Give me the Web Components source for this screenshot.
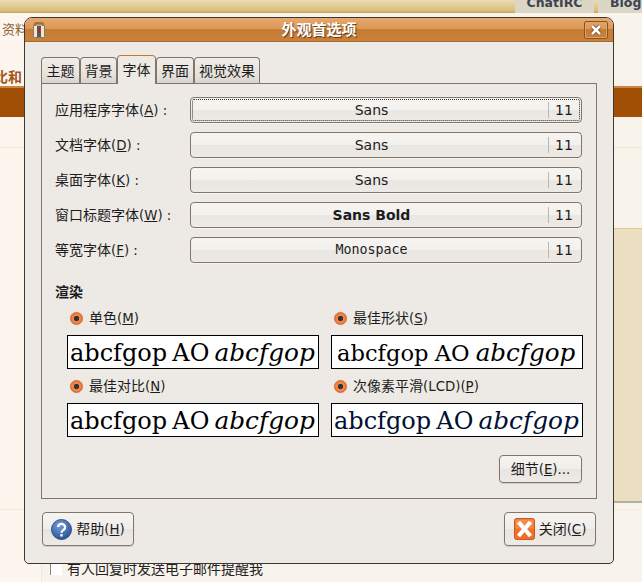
<!DOCTYPE html>
<html lang="zh">
<head>
<meta charset="utf-8">
<title>外观首选项</title>
<style>
html, body { margin: 0; height: 100%; overflow: hidden; }
body { font: 14px "DejaVu Sans", "Noto Sans CJK SC", sans-serif; color: #1c1c1c; }
</style>
</head>
<body>
<page-backdrop></page-backdrop>
<prefs-dialog>
  <tab-item slot="tabs" class="first">主题</tab-item>
  <tab-item slot="tabs" class="second">背景</tab-item>
  <tab-item slot="tabs" active>字体</tab-item>
  <tab-item slot="tabs">界面</tab-item>
  <tab-item slot="tabs">视觉效果</tab-item>

  <font-row focused key="A" label="应用程序字体" font="Sans"></font-row>
  <font-row key="D" label="文档字体" font="Sans"></font-row>
  <font-row key="K" label="桌面字体" font="Sans"></font-row>
  <font-row key="W" label="窗口标题字体" font="Sans Bold" bold></font-row>
  <font-row key="F" label="等宽字体" font="Monospace" mono></font-row>

  <render-option slot="render" key="M" label="单色" mode="mono"></render-option>
  <render-option slot="render" key="S" label="最佳形状" mode="shape"></render-option>
  <render-option slot="render" key="N" label="最佳对比" mode="contrast"></render-option>
  <render-option slot="render" key="P" label="次像素平滑(LCD)" mode="lcd"></render-option>

  <gtk-button slot="details" label="细节" key="E" tail="..."></gtk-button>
  <gtk-button slot="help" wide label="帮助" key="H">
    <svg slot="icon" width="21" height="21" viewBox="1.5 1.5 21 21">
      <defs><radialGradient id="h" cx=".4" cy=".3" r=".8"><stop offset="0" stop-color="#7a9fd8"/><stop offset="1" stop-color="#1d4a90"/></radialGradient></defs>
      <circle cx="12" cy="12" r="10" fill="url(#h)" stroke="#2d4f86"/>
      <path d="M8.6 9.6a3.5 3.3 0 1 1 5.6 2.7c-1.3 1-2.2 1.4-2.2 3" fill="none" stroke="#fff" stroke-width="2.3"/>
      <rect x="10.8" y="16.6" width="2.4" height="2.4" fill="#fff"/>
    </svg>
  </gtk-button>
  <gtk-button slot="close" wide label="关闭" key="C">
    <svg slot="icon" width="21" height="22" viewBox="0 0 21 22">
      <rect x=".5" y=".5" width="20" height="21" rx="2" fill="#f0702a" stroke="#c9591c"/>
      <rect x="1.5" y="1.5" width="18" height="9" fill="#f68b4e"/>
      <path d="M4.5 4l12 14M16.5 4l-12 14" stroke="#fff" stroke-width="4.2"/>
    </svg>
  </gtk-button>
</prefs-dialog>

<script>
// latin runs of the labels are set a bit smaller than the CJK ones
function latinSmall(text) {
  return text.replace(/[\x20-\x7e]+/g, (m) => `<span style="font-size:13.33px">${m}</span>`);
}

class PageBackdrop extends HTMLElement {
  connectedCallback() {
    this.attachShadow({ mode: 'open' });
    this.shadowRoot.innerHTML = `<style>
      :host { display: block; height: 582px; background: #f8f4ec; position: relative; overflow: hidden; font-family: "DejaVu Sans", "Noto Sans CJK SC", sans-serif; }
      .top { height: 13px; background: linear-gradient(#eadcb6, #dcbb76 85%, #b9a068); display: flex; justify-content: flex-end; gap: 4px; }
      .tab { height: 13px; background: #dcd6c4; color: #3c4456; font: bold 12.5px "DejaVu Sans", sans-serif; line-height: 6px; overflow: hidden; box-sizing: border-box; }
      .tab.a { width: 79px; text-align: center; }
      .tab.b { width: 44px; padding-left: 12px; }
      .left { position: absolute; left: 0; top: 13px; width: 41px; height: 569px; background: #fdf6ef; }
      .ziliao { position: absolute; left: 2px; top: 19px; font-size: 13px; color: #8a6238; white-space: nowrap; }
      .bihe { position: absolute; left: -6px; top: 66px; font: bold 14px "Noto Sans CJK SC", sans-serif; color: #a4561a; white-space: nowrap; }
      .band { position: absolute; left: 0; right: 0; top: 86px; height: 31px; background: #a04f04; border-top: 2px solid #cc843f; box-sizing: border-box; }
      .rule { position: absolute; left: 0; right: 0; top: 147px; height: 1px; background: #f2e6d6; }
      .rule2 { position: absolute; left: 0; right: 0; top: 509px; height: 1px; background: #f6ead8; }
      .tan { position: absolute; left: 613px; right: 0; top: 228px; height: 273px; background: #ecdfc1; border-top: 1px solid #d8c89c; box-sizing: border-box; }
      .grey { position: absolute; left: 613px; right: 0; top: 501px; height: 2px; background: #b4b0a6; }
      .notify { position: absolute; left: 50px; top: 558px; display: flex; align-items: center; gap: 5px; font-size: 14px; color: #222; white-space: nowrap; }
      .notify i { width: 12px; height: 13px; background: #fff; border-left: 1px solid #888; box-sizing: border-box; }
      .gutter { position: absolute; left: 41px; top: 560px; bottom: 0; width: 1px; background: #f2e6d6; }
    </style>
    <div class="top"><div class="tab a">ChatIRC</div><div class="tab b">Blog</div></div>
    <div class="left"></div>
    <div class="ziliao">资料</div>
    <div class="bihe">比和</div>
    <div class="band"></div>
    <div class="rule"></div><div class="rule2"></div>
    <div class="tan"></div><div class="grey"></div>
    <div class="gutter"></div>
    <div class="notify"><i></i>有人回复时发送电子邮件提醒我</div>`;
  }
}

class PrefsDialog extends HTMLElement {
  connectedCallback() {
    this.attachShadow({ mode: 'open' });
    this.shadowRoot.innerHTML = `<style>
      :host { display: flex; flex-direction: column; position: absolute; left: 24px; top: 17px; width: 590px; height: 547px; box-sizing: border-box;
        background: #edeae5; border: 1px solid #3e372e; border-radius: 8px 8px 5px 5px; overflow: hidden; }
      .title { height: 24px; flex: none; display: grid; grid-template-columns: 1fr auto 1fr; align-items: center; box-sizing: border-box; border-bottom: 1px solid #a8672c;
        background: linear-gradient(#e6a86e, #da9856 50%, #c67c34 50%, #c9813b); }
      .title b { color: #fff; font: bold 15px/20px "Noto Sans CJK SC", sans-serif; text-shadow: 1px 1px 1px #5a3a18; padding-bottom: 2px; }
      .app { margin-left: 8px; display: block; }
      .x { width: 24px; height: 18px; margin-right: 5px; justify-self: end; border: 1px solid #8a5421; border-radius: 2px; box-shadow: inset 0 0 0 1px #dba26b; display: flex; align-items: center; justify-content: center; box-sizing: border-box; }
      .body { flex: 1; display: flex; flex-direction: column; padding: 13px 16px 0; }
      .tabs { display: flex; align-items: flex-end; height: 28px; flex: none; }
      .book { height: 416px; width: 556px; box-sizing: border-box; flex: none; border: 1px solid #82766a; padding: 13px 14px 0 13px; }
      .rows { display: flex; flex-direction: column; gap: 9px; }
      h4 { margin: 18px 0 0; font: bold 14px/20px "Noto Sans CJK SC", sans-serif; }
      .grid { display: grid; grid-template-columns: 252px 252px; column-gap: 12px; padding: 6px 0 0 12px; }
      .det { display: flex; justify-content: flex-end; margin-top: 12px; }
      .det ::slotted(*) { width: 83px; height: 28px; }
      .foot { flex: 1; display: flex; justify-content: space-between; align-items: flex-start; padding: 13px 1px 0 1px; }
    </style>
    <div class="title">
      <svg class="app" width="12" height="16" viewBox="0 0 12 16">
        <rect x=".5" y="3" width="11" height="12.5" rx="1" fill="#ece6d8" stroke="#8a7a5c"/>
        <path d="M2 4V2a1 1 0 0 1 1-1h6a1 1 0 0 1 1 1v2" fill="none" stroke="#8f6a2e" stroke-width="1.5"/>
        <rect x="4" y="4" width="4" height="11" fill="#5a5a5a"/><rect x="5" y="6" width="2" height="5" fill="#b3261e"/>
      </svg>
      <b>外观首选项</b>
      <div class="x"><svg width="12" height="12" viewBox="0 0 12 12"><path d="M2 2l8 8M10 2l-8 8" stroke="#6b4318" stroke-width="4"/><path d="M2 2l8 8M10 2l-8 8" stroke="#fff" stroke-width="2.6"/></svg></div>
    </div>
    <div class="body">
      <div class="tabs"><slot name="tabs"></slot></div>
      <div class="book">
        <div class="rows"><slot></slot></div>
        <h4>渲染</h4>
        <div class="grid"><slot name="render"></slot></div>
        <div class="det"><slot name="details"></slot></div>
      </div>
      <div class="foot"><slot name="help"></slot><slot name="close"></slot></div>
    </div>`;
  }
}

class TabItem extends HTMLElement {
  connectedCallback() {
    this.attachShadow({ mode: 'open' });
    this.shadowRoot.innerHTML = `<style>
      :host { display: block; height: 26px; box-sizing: border-box; padding: 0 4px; line-height: 25px; position: relative;
        border: 1px solid #82766a; border-bottom: 0; border-radius: 4px 4px 0 0; background: linear-gradient(#f0ede8, #e6e2dc 70%, #d8d3cc); font-family: "Noto Sans CJK SC", sans-serif; font-size: 14px; }
      :host(.first) { padding: 0 4.5px; }
      :host(.second) { padding: 0 3.5px; }
      :host([active]) { height: 29px; line-height: 27px; padding: 0 4.5px; background: #edeae5; border-top-color: #c4772f; margin-bottom: -1px; z-index: 1; }
    </style><slot></slot>`;
  }
}

class FontRow extends HTMLElement {
  connectedCallback() {
    const label = this.getAttribute('label');
    const key = this.getAttribute('key');
    const font = this.getAttribute('font');
    const fam = this.hasAttribute('mono') ? '"DejaVu Sans Mono", monospace' : '"DejaVu Sans", sans-serif';
    this.attachShadow({ mode: 'open' });
    this.shadowRoot.innerHTML = `<style>
      :host { display: grid; grid-template-columns: 135px 392px; align-items: center; height: 26px; font-family: "DejaVu Sans", "Noto Sans CJK SC", sans-serif; }
      .lab { white-space: nowrap; line-height: 16px; }
      .btn { height: 26px; box-sizing: border-box; border: 1px solid #82766a; border-radius: 4px; display: flex; align-items: center; position: relative;
        background: linear-gradient(#f6f4f1, #f3f1ed 50%, #eae7e3 50%, #edeae6); box-shadow: 0 1px 0 #fff8; }
      :host([focused]) .btn::after { content: ""; position: absolute; inset: 1px; border: 1px dotted #333; border-radius: 2px; }
      .name { flex: 1; text-align: center; padding-left: 4px; line-height: 16px; margin-top: -1px; font-family: ${fam}; font-size: ${this.hasAttribute('mono') ? '13.33px' : '14px'}; font-weight: ${this.hasAttribute('bold') ? 'bold' : 'normal'}; }
      .size { width: 33px; box-sizing: border-box; height: 16px; line-height: 16px; border-left: 1px solid #bdb7ae; padding-left: 6px; flex: none; }
    </style>
    <span class="lab">${label}${latinSmall(`(`)}<u>${latinSmall(key)}</u>${latinSmall(') :')}</span>
    <div class="btn"><span class="name">${font}</span><span class="size">11</span></div>`;
  }
}

class RenderOption extends HTMLElement {
  connectedCallback() {
    const mode = this.getAttribute('mode');
    const styles = {
      mono: 'font-size: 24px; padding-left: 2px; word-spacing: -2.5px;',
      shape: 'font-size: 22.6px; padding-left: 5px; word-spacing: -1px;',
      contrast: 'font-size: 24px; padding-left: 2px; word-spacing: -2.5px;',
      lcd: 'font-size: 24px; padding-left: 2px; word-spacing: -2.5px; color: #001030;'
    };
    const italic = mode == 'shape' ? '24.6px' : '24.8px';
    this.attachShadow({ mode: 'open' });
    this.shadowRoot.innerHTML = `<style>
      :host { display: block; height: 68px; font-family: "DejaVu Sans", "Noto Sans CJK SC", sans-serif; font-size: 14px; }
      .opt { display: flex; align-items: center; gap: 6px; height: 22px; padding-left: 3px; white-space: nowrap; }
      .opt span:last-child { line-height: 16px; }
      .dot { width: 13px; height: 13px; border-radius: 50%; background: radial-gradient(#333 0 2.4px, #f58a4b 3px, #f0783a 5px); border: 1px solid #c0703f; box-sizing: border-box; box-shadow: 0 0 0 1px #f3e2d6; flex: none; }
      .box { height: 34px; box-sizing: border-box; margin-top: 6px; border: 1px solid #000; background: #fff; color: #000; font-family: "DejaVu Serif", serif; line-height: 34px; white-space: nowrap; overflow: hidden; width: 252px; ${styles[mode]} }
      i { font-size: ${italic}; }
    </style>
    <div class="opt"><span class="dot"></span><span>${latinSmall(this.getAttribute('label') + '(')}<u>${latinSmall(this.getAttribute('key'))}</u>${latinSmall(')')}</span></div>
    <div class="box">abcfgop AO <i>abcfgop</i></div>`;
  }
}

class GtkButton extends HTMLElement {
  connectedCallback() {
    const tail = this.getAttribute('tail') || '';
    this.attachShadow({ mode: 'open' });
    this.shadowRoot.innerHTML = `<style>
      :host { display: inline-flex; align-items: center; justify-content: center; box-sizing: border-box; height: 34px; gap: 4px; border: 1px solid #82766a; border-radius: 4px;
        background: linear-gradient(#f6f4f1, #f0eeea 50%, #e8e5e0 50%, #eeebe7); font-family: "DejaVu Sans", "Noto Sans CJK SC", sans-serif; font-size: 14px; white-space: nowrap; box-shadow: 0 1px 1px #0002; }
      :host([wide]) { width: 92px; }
      ::slotted(svg) { flex: none; }
      .txt { line-height: 16px; }
    </style><slot name="icon"></slot><span class="txt">${this.getAttribute('label')}${latinSmall('(')}<u>${latinSmall(this.getAttribute('key'))}</u>${latinSmall(')' + tail)}</span>`;
  }
}

customElements.define('page-backdrop', PageBackdrop);
customElements.define('prefs-dialog', PrefsDialog);
customElements.define('tab-item', TabItem);
customElements.define('font-row', FontRow);
customElements.define('render-option', RenderOption);
customElements.define('gtk-button', GtkButton);
</script>
</body>
</html>
